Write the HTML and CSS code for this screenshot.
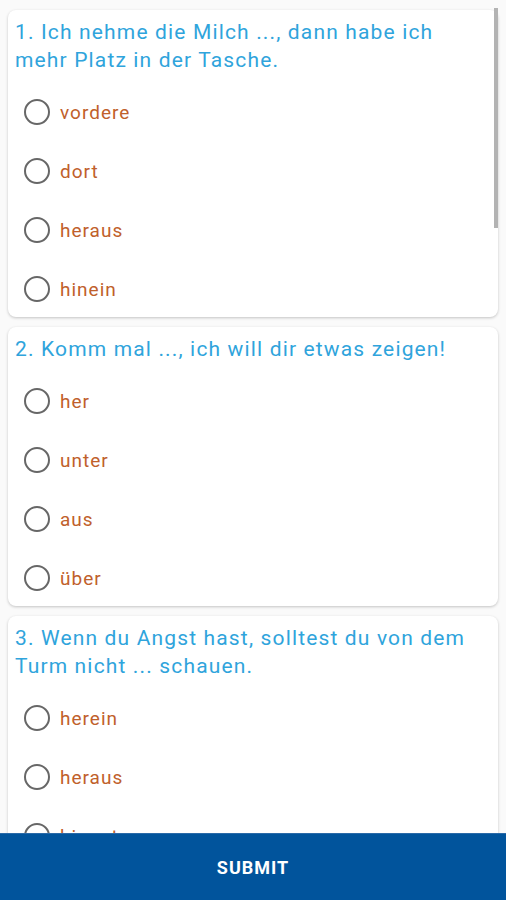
FILE: index.html
```html
<!DOCTYPE html>
<html lang="de">
<head>
    <meta charset="UTF-8">
    <meta name="viewport" content="width=device-width, initial-scale=1.0">
    <link rel="stylesheet" href="styles.css">
    <title>Quiz</title>
</head>
<body>
    <div id="quiz">
        <div class="card">
            <div class="question">1. Ich nehme die Milch ..., dann habe ich mehr Platz in der Tasche.</div>
            <div class="options">
                <label class="option"><span class="radio"></span>vordere</label>
                <label class="option"><span class="radio"></span>dort</label>
                <label class="option"><span class="radio"></span>heraus</label>
                <label class="option"><span class="radio"></span>hinein</label>
            </div>
        </div>
        <div class="card">
            <div class="question">2. Komm mal ..., ich will dir etwas zeigen!</div>
            <div class="options">
                <label class="option"><span class="radio"></span>her</label>
                <label class="option"><span class="radio"></span>unter</label>
                <label class="option"><span class="radio"></span>aus</label>
                <label class="option"><span class="radio"></span>über</label>
            </div>
        </div>
        <div class="card">
            <div class="question">3. Wenn du Angst hast, solltest du von dem Turm nicht ... schauen.</div>
            <div class="options">
                <label class="option"><span class="radio"></span>herein</label>
                <label class="option"><span class="radio"></span>heraus</label>
                <label class="option"><span class="radio"></span>hinunter</label>
                <label class="option"><span class="radio"></span>hinauf</label>
            </div>
        </div>
    </div>
    <div class="scrollbar"></div>
    <button id="submitButton">SUBMIT</button>
</body>
</html>
```
FILE: styles.css
```css
html, body {
    margin: 0;
    padding: 0;
    height: 100%;
    overflow: hidden;
    font-family: Roboto, "Noto Sans", sans-serif;
    background-color: #fafafa;
}
#quiz {
    display: flex;
    flex-direction: column;
    gap: 10px;
    padding: 10px 8px 0 8px;
}
.card {
    background-color: #ffffff;
    border-radius: 8px;
    box-shadow: 0 1px 3px rgba(0, 0, 0, 0.22);
    padding: 8px 0 5px 0;
}
.question {
    color: #2fa4dc;
    font-size: 21px;
    line-height: 28px;
    letter-spacing: 1.15px;
    padding: 0 20px 0 7px;
}
.options {
    display: flex;
    flex-direction: column;
    gap: 13px;
    margin-top: 15px;
}
.option {
    display: flex;
    align-items: center;
    height: 46px;
    padding-left: 16px;
    color: #c0602b;
    font-size: 19px;
    letter-spacing: 1px;
}
.radio {
    width: 22px;
    height: 22px;
    border: 2px solid #676767;
    border-radius: 50%;
    margin-right: 10px;
}
.scrollbar {
    position: absolute;
    top: 8px;
    left: 494px;
    width: 4px;
    height: 220px;
    background-color: #b3b3b3;
}
#submitButton {
    position: fixed;
    left: 0;
    bottom: 0;
    width: 100%;
    height: 67px;
    border: none;
    border-top: 1px solid #2a6aa8;
    background-color: #01549c;
    color: #ffffff;
    font-family: Roboto, sans-serif;
    font-weight: bold;
    font-size: 18px;
    letter-spacing: 1px;
}
```
